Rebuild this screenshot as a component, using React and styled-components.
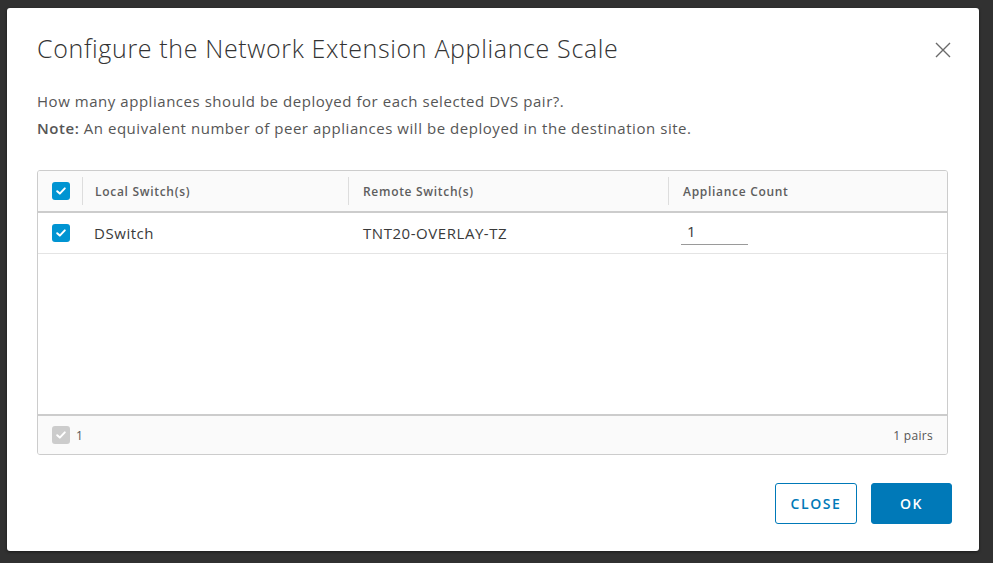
import React from "react";
import styled, { createGlobalStyle } from "styled-components";

const Global = createGlobalStyle`
  html, body { margin: 0; padding: 0; background: #313131; }
  body { font-family: "Open Sans", "Liberation Sans", sans-serif; }
  * { box-sizing: border-box; }
`;

const Page = styled.div`
  width: 993px;
  height: 563px;
  padding: 8px 14px 12px 7px;
  background: #313131;
`;

const Modal = styled.div`
  height: 543px;
  background: #fff;
  border-radius: 3px;
  box-shadow: 0 1px 3px rgba(0, 0, 0, 0.5);
  padding: 24px 27px 27px 30px;
  display: flex;
  flex-direction: column;
`;

const Header = styled.div`
  display: flex;
  align-items: center;
  justify-content: space-between;
  height: 32px;
`;

const Title = styled.h3`
  margin: 0;
  font-size: 25px;
  font-weight: 300;
  letter-spacing: 0.65px;
  line-height: 32px;
  color: #333;
`;

const CloseIcon = styled.button`
  border: 0;
  background: none;
  padding: 0;
  margin-right: 1px;
  margin-top: 4px;
  width: 16px;
  height: 16px;
  display: flex;
  cursor: pointer;
`;

const Body = styled.div`
  margin-top: 25px;
  display: flex;
  flex-direction: column;
  gap: 3px;
`;

const Para = styled.p`
  margin: 0;
  font-size: 15px;
  letter-spacing: 0.54px;
  line-height: 24px;
  color: #565656;
  b { font-weight: 600; color: #565656; }
`;

const Grid = styled.div`
  margin-top: 30px;
  margin-right: 4px;
  height: 285px;
  border: 1px solid #ccc;
  border-radius: 3px;
  display: flex;
  flex-direction: column;
  overflow: hidden;
`;

const Row = styled.div`
  display: grid;
  grid-template-columns: 44px 266px 320px 1fr;
  height: ${(p) => (p.$head ? "42px" : "41px")};
  background: ${(p) => (p.$head ? "#fafafa" : "#fff")};
  border-bottom: ${(p) => (p.$head ? "2px solid #ccc" : "1px solid #e4e4e4")};
`;

const Cell = styled.div`
  display: flex;
  align-items: center;
  padding-left: ${(p) => p.$pad || 0}px;
  font-size: 15px;
  letter-spacing: 0.55px;
  color: #3a3a3a;
`;

const HeadCell = styled.div`
  display: flex;
  align-items: center;
`;

const HeadLabel = styled.div`
  height: 28px;
  display: flex;
  align-items: center;
  flex: 1;
  border-left: 1px solid #ddd;
  padding-left: ${(p) => p.$pad}px;
  font-size: 12px;
  font-weight: 600;
  color: #5e5e5e;
  letter-spacing: 0.7px;
`;

const Box = styled.span`
  width: 18px;
  height: 18px;
  border-radius: 3px;
  background: ${(p) => (p.$disabled ? "#ccc" : "#0094d2")};
  display: inline-flex;
  align-items: center;
  justify-content: center;
  margin-left: ${(p) => p.$ml || 0}px;
`;

const CountInput = styled.input`
  width: 67px;
  height: 24px;
  border: 0;
  border-bottom: 1px solid #9a9a9a;
  outline: none;
  padding: 0 6px 3px;
  margin-left: 13px;
  font-family: inherit;
  font-size: 15px;
  color: #3a3a3a;
  background: transparent;
`;

const Spacer = styled.div`
  flex: 1;
`;

const Footer = styled.div`
  height: 40px;
  border-top: 2px solid #ccc;
  background: #fafafa;
  display: flex;
  align-items: center;
  padding: 0 14px 0 14px;
  font-size: 12px;
  letter-spacing: 0.3px;
  color: #565656;
`;

const FooterCount = styled.span`
  margin-left: 6px;
  flex: 1;
`;

const Actions = styled.div`
  margin-top: auto;
  display: flex;
  justify-content: flex-end;
  gap: 14px;
`;

const Button = styled.button`
  height: 41px;
  width: ${(p) => p.$w}px;
  border-radius: 3px;
  border: 1px solid #0079b8;
  background: ${(p) => (p.$primary ? "#0079b8" : "#fff")};
  color: ${(p) => (p.$primary ? "#fff" : "#0079b8")};
  font-family: inherit;
  font-size: 14px;
  font-weight: 600;
  letter-spacing: 1.6px;
  text-transform: uppercase;
  cursor: pointer;
`;

const Check = ({ disabled, ml }) => (
  <Box $disabled={disabled} $ml={ml}>
    <svg width="12" height="12" viewBox="0 0 12 12">
      <polyline
        points="2.2,6.2 4.8,8.6 9.8,3.4"
        fill="none"
        stroke="#fff"
        strokeWidth="2"
        strokeLinecap="round"
        strokeLinejoin="round"
      />
    </svg>
  </Box>
);

export default function App() {
  return (
    <Page>
      <Global />
      <Modal>
        <Header>
          <Title>Configure the Network Extension Appliance Scale</Title>
          <CloseIcon aria-label="Close">
            <svg width="16" height="16" viewBox="0 0 16 16">
              <path d="M1 1 L15 15 M15 1 L1 15" stroke="#6a6a6a" strokeWidth="1.4" />
            </svg>
          </CloseIcon>
        </Header>
        <Body>
          <Para>How many appliances should be deployed for each selected DVS pair?.</Para>
          <Para>
            <b>Note:</b> An equivalent number of peer appliances will be deployed in the destination site.
          </Para>
        </Body>
        <Grid>
          <Row $head>
            <Cell>
              <Check ml={14} />
            </Cell>
            <HeadCell>
              <HeadLabel $pad={12}>Local Switch(s)</HeadLabel>
            </HeadCell>
            <HeadCell>
              <HeadLabel $pad={14}>Remote Switch(s)</HeadLabel>
            </HeadCell>
            <HeadCell>
              <HeadLabel $pad={14}>Appliance Count</HeadLabel>
            </HeadCell>
          </Row>
          <Row>
            <Cell>
              <Check ml={14} />
            </Cell>
            <Cell $pad={12}>DSwitch</Cell>
            <Cell $pad={15}>TNT20-OVERLAY-TZ</Cell>
            <Cell>
              <CountInput defaultValue="1" />
            </Cell>
          </Row>
          <Spacer />
          <Footer>
            <Check disabled />
            <FooterCount>1</FooterCount>
            <span>1 pairs</span>
          </Footer>
        </Grid>
        <Actions>
          <Button $w={82}>Close</Button>
          <Button $w={81} $primary>
            OK
          </Button>
        </Actions>
      </Modal>
    </Page>
  );
}
